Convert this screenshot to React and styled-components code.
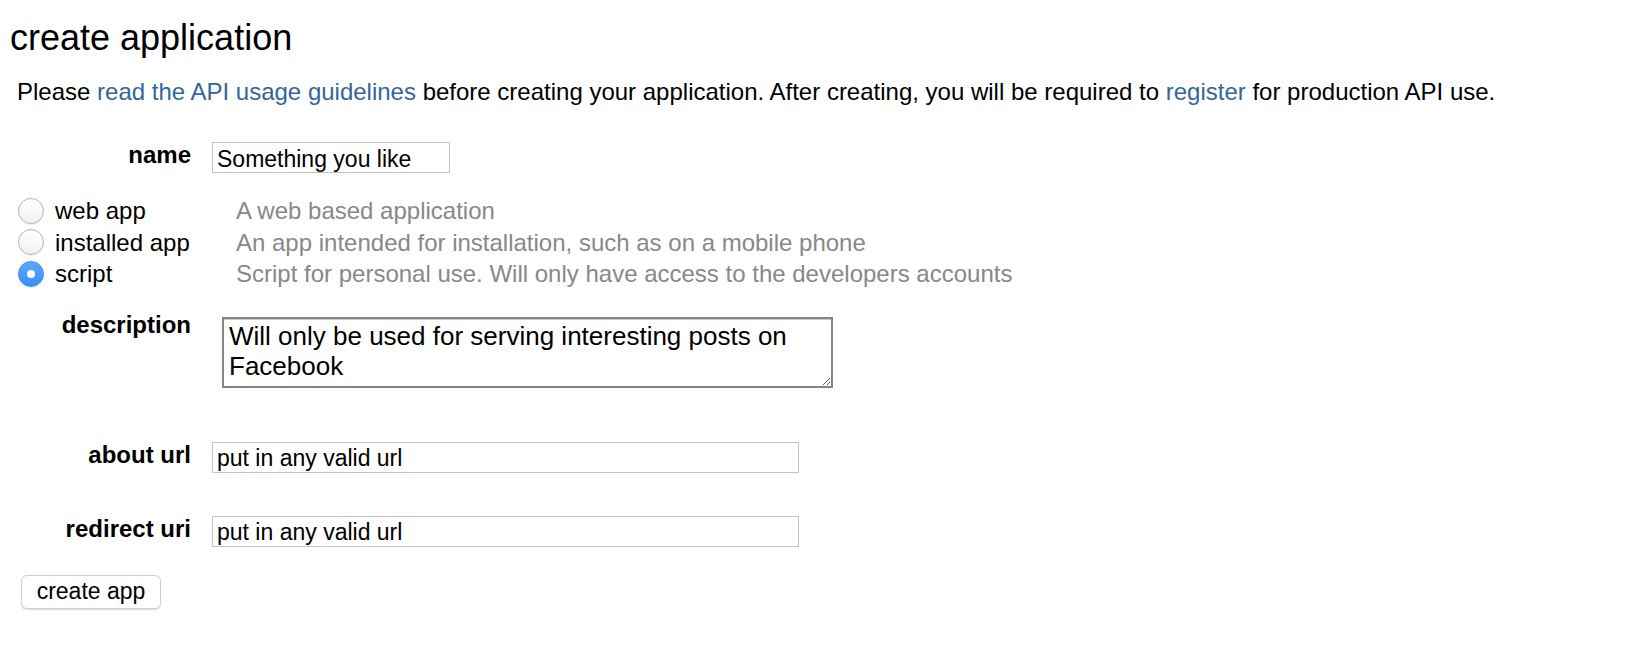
import { useState } from "react";
import styled, { createGlobalStyle } from "styled-components";

const GlobalStyle = createGlobalStyle`
  body {
    margin: 0;
    background: #fff;
    color: #000;
    font-family: "Liberation Sans", Arial, Helvetica, sans-serif;
  }
`;

const appTypes = [
  { value: "web", label: "web app", hint: "A web based application" },
  {
    value: "installed",
    label: "installed app",
    hint: "An app intended for installation, such as on a mobile phone",
  },
  {
    value: "script",
    label: "script",
    hint: "Script for personal use. Will only have access to the developers accounts",
  },
];

const App = () => {
  const [form, setForm] = useState({
    name: "Something you like",
    type: "script",
    description: "Will only be used for serving interesting posts on Facebook",
    aboutUrl: "put in any valid url",
    redirectUri: "put in any valid url",
  });

  const handleChange = (e) => {
    const { name, value } = e.target;
    setForm((prev) => ({ ...prev, [name]: value }));
  };

  return (
    <Page>
      <GlobalStyle />
      <Title>create application</Title>
      <Intro>
        Please <TextLink href="#">read the API usage guidelines</TextLink> before
        creating your application. After creating, you will be required to{" "}
        <TextLink href="#">register</TextLink> for production API use.
      </Intro>

      <Form onSubmit={(e) => e.preventDefault()}>
        <FieldRow $gap={34}>
          <Label>name</Label>
          <TextInput
            $width={238}
            name="name"
            value={form.name}
            onChange={handleChange}
          />
        </FieldRow>

        <RadioList>
          {appTypes.map((t) => (
            <RadioRow key={t.value}>
              <RadioChoice>
                <Radio
                  type="radio"
                  name="type"
                  value={t.value}
                  checked={form.type === t.value}
                  onChange={handleChange}
                />
                <span>{t.label}</span>
              </RadioChoice>
              <Hint>{t.hint}</Hint>
            </RadioRow>
          ))}
        </RadioList>

        <FieldRow $gap={20}>
          <Label>description</Label>
          <TextArea
            name="description"
            value={form.description}
            onChange={handleChange}
          />
        </FieldRow>

        <FieldRow $gap={52}>
          <Label>about url</Label>
          <TextInput
            $width={587}
            name="aboutUrl"
            value={form.aboutUrl}
            onChange={handleChange}
          />
        </FieldRow>

        <FieldRow $gap={41}>
          <Label>redirect uri</Label>
          <TextInput
            $width={587}
            name="redirectUri"
            value={form.redirectUri}
            onChange={handleChange}
          />
        </FieldRow>

        <SubmitButton type="submit">create app</SubmitButton>
      </Form>
    </Page>
  );
};

const Page = styled.div`
  padding-bottom: 40px;
`;

const Title = styled.h1`
  margin: 17px 0 0 10px;
  font-size: 36px;
  line-height: 41px;
  font-weight: normal;
`;

const Intro = styled.p`
  margin: 20px 0 0 17px;
  font-size: 24px;
  line-height: 28px;
`;

const TextLink = styled.a`
  color: #336699;
  text-decoration: none;
`;

const Form = styled.form`
  display: flex;
  flex-direction: column;
  align-items: flex-start;
`;

const FieldRow = styled.div`
  display: flex;
  align-items: flex-start;
  margin-top: ${(p) => p.$gap}px;
`;

const Label = styled.label`
  width: 191px;
  text-align: right;
  font-size: 24px;
  line-height: 30px;
  font-weight: bold;
`;

const TextInput = styled.input`
  box-sizing: border-box;
  width: ${(p) => p.$width}px;
  height: 31px;
  margin: 2px 0 0 21px;
  padding: 3px 4px 0;
  border: 1px solid #c4c4c4;
  border-radius: 0;
  font-family: "Liberation Sans", Arial, sans-serif;
  font-size: 23px;
  color: #000;
  outline: none;
`;

const TextArea = styled.textarea`
  box-sizing: border-box;
  width: 611px;
  height: 71px;
  margin: 7px 0 0 31px;
  padding: 2px 5px;
  border: 2px solid #858585;
  box-shadow: inset 0 1px 0 #c9c9c9;
  font-family: "Liberation Sans", Arial, sans-serif;
  font-size: 26px;
  line-height: 30px;
  color: #000;
  outline: none;
`;

const RadioList = styled.div`
  margin-top: 22px;
  display: flex;
  flex-direction: column;
`;

const RadioRow = styled.div`
  display: flex;
  align-items: center;
  height: 31.5px;
  font-size: 24px;
  line-height: 31.5px;
`;

const RadioChoice = styled.label`
  display: flex;
  align-items: center;
  gap: 11px;
  width: 218px;
  padding-left: 18px;
`;

const Radio = styled.input`
  appearance: none;
  box-sizing: border-box;
  width: 26px;
  height: 26px;
  margin: 0;
  border-radius: 50%;
  border: 1px solid #b5b5b5;
  background: linear-gradient(#ffffff, #f1f1f1);
  box-shadow: 0 1px 1px rgba(0, 0, 0, 0.08);
  position: relative;

  &:checked {
    border-color: #3b8ff0;
    background: linear-gradient(#5aa9fb, #3791f7);
  }

  &:checked::after {
    content: "";
    position: absolute;
    left: 50%;
    top: 50%;
    width: 8px;
    height: 8px;
    border-radius: 50%;
    background: #fff;
    transform: translate(-50%, -50%);
  }
`;

const Hint = styled.span`
  color: #888;
`;

const SubmitButton = styled.button`
  margin: 28px 0 0 21px;
  width: 140px;
  height: 34px;
  padding: 0;
  background: #fff;
  border: 1px solid #cfcfcf;
  border-radius: 6px;
  box-shadow: 0 1px 1px rgba(0, 0, 0, 0.15);
  font-family: "Liberation Sans", Arial, sans-serif;
  font-size: 23px;
  color: #000;
`;

export default App;
